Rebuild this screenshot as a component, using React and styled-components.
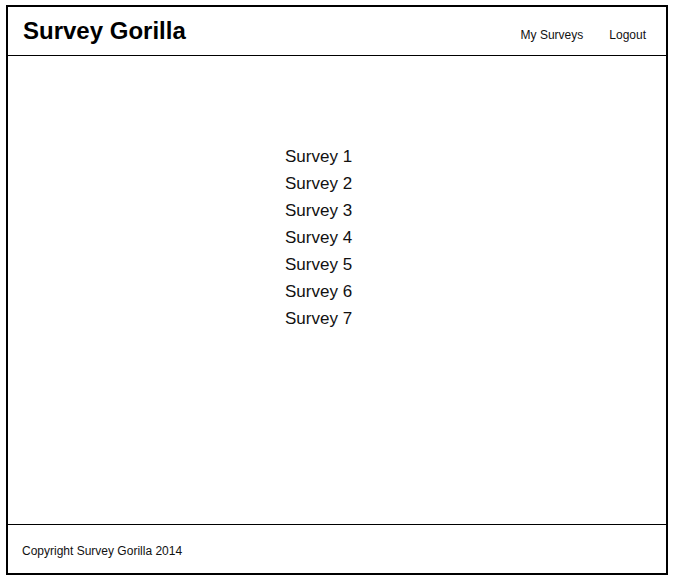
import React from 'react';
import styled, { createGlobalStyle } from 'styled-components';

const GlobalStyle = createGlobalStyle`
   body {
      margin: 0;
      background: #fff;
      font-family: "Liberation Sans", Arial, sans-serif;
      color: #111;
   }
`;

const Frame = styled.div`
   box-sizing: border-box;
   margin: 5px 0 0 6px;
   width: 662px;
   height: 570px;
   border: 2px solid #000;
   display: flex;
   flex-direction: column;
`;

const Header = styled.header`
   height: 48px;
   border-bottom: 1px solid #000;
   display: flex;
   align-items: center;
   justify-content: space-between;
   padding: 0 20px 0 15px;
`;

const Title = styled.h1`
   margin: 0;
   font-size: 24px;
   font-weight: bold;
   color: #000;
`;

const Nav = styled.nav`
   display: flex;
   gap: 26px;
   padding-top: 8px;
`;

const NavLink = styled.a`
   font-size: 12px;
   color: #111;
   text-decoration: none;
`;

const Main = styled.main`
   flex: 1;
   padding: 87px 0 0 277px;
`;

const SurveyList = styled.ul`
   list-style: none;
   margin: 0;
   padding: 0;
`;

const SurveyItem = styled.li`
   font-size: 17px;
   line-height: 27px;
`;

const Footer = styled.footer`
   height: 49px;
   border-top: 1px solid #000;
   display: flex;
   align-items: center;
   padding: 3px 0 0 14px;
   box-sizing: border-box;
   font-size: 12px;
`;

const surveys = [1, 2, 3, 4, 5, 6, 7];

const App = () => {
   return (
      <>
         <GlobalStyle />
         <Frame>
            <Header>
               <Title>Survey Gorilla</Title>
               <Nav>
                  <NavLink href="#">My Surveys</NavLink>
                  <NavLink href="#">Logout</NavLink>
               </Nav>
            </Header>
            <Main>
               <SurveyList>
                  {surveys.map((n) => (
                     <SurveyItem key={n}>Survey {n}</SurveyItem>
                  ))}
               </SurveyList>
            </Main>
            <Footer>Copyright Survey Gorilla 2014</Footer>
         </Frame>
      </>
   );
};

export default App;
